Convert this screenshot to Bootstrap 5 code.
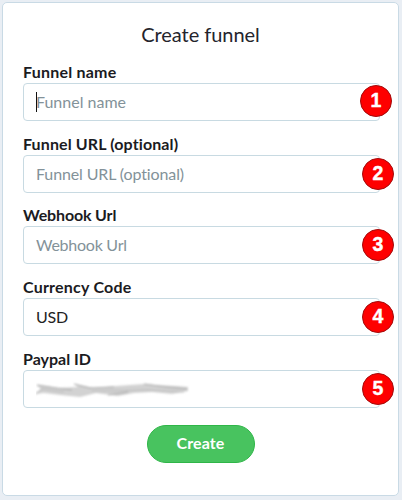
<!DOCTYPE html>
<html lang="en">
<head>
<meta charset="utf-8">
<meta name="viewport" content="width=device-width, initial-scale=1">
<title>Create funnel</title>
<link href="https://cdn.jsdelivr.net/npm/bootstrap@5.3.0/dist/css/bootstrap.min.css" rel="stylesheet">
<style>
html,body{height:500px;overflow:hidden}
body{background:#e9eef4;font-family:Lato,"Open Sans",sans-serif;font-variant-ligatures:none;color:#1b1b22;padding:2px 3px 4px 2px}
.funnel-card{height:494px;border:1px solid #c9dae5;border-radius:5px;padding:18px 20px 0}
.funnel-title{font-size:20px;line-height:26px;height:38px;font-weight:400;letter-spacing:-.05px;color:#24242c}
.field{height:71.7px}
.field .form-label{font-size:16px;line-height:22px;height:24px;padding-top:2px;font-weight:700;display:block;white-space:nowrap}
.track-wide{letter-spacing:.22px}
.track-mid{letter-spacing:.12px}
.track-tight{letter-spacing:-.15px}
.field .form-control{height:38px;width:357px;border:1px solid #c8dae2;border-radius:4px;padding:0 12px 1px;font-size:16px;line-height:35px;color:#222}
.field .form-control::placeholder{color:#839299;opacity:1}
.field .form-control.track-tight{letter-spacing:-.25px}
.field .form-control.track-snug{letter-spacing:-.12px}
.step{right:-16px;top:3px;width:32px;height:32px;border:1.5px solid #a30b0b;background:#fe0000;color:#fff;font:700 19.5px/28px "Liberation Sans",sans-serif;-webkit-text-stroke:.4px #fff}
.step-first{right:-14px;top:2px}
.caret{left:13px;top:9px;width:1px;height:20px;background:#111}
.btn-create{width:108px;height:38px;margin-top:8px;background:#48c35f;border:1px solid #2fb648;color:#fff;font-size:16px;line-height:34px;font-weight:700;letter-spacing:.1px;padding:0 0 2px}
</style>
</head>
<body>
<main class="funnel-card bg-white">
  <h1 class="funnel-title text-center mb-0">Create funnel</h1>
  <form>
    <div class="field"><label class="form-label track-wide mb-0" for="f1">Funnel name</label>
      <div class="position-relative"><input id="f1" class="form-control" placeholder="Funnel name"><span class="caret position-absolute"></span><span class="step step-first position-absolute rounded-circle text-center">1</span></div></div>
    <div class="field"><label class="form-label track-mid mb-0" for="f2">Funnel URL (optional)</label>
      <div class="position-relative"><input id="f2" class="form-control track-snug" placeholder="Funnel URL (optional)"><span class="step position-absolute rounded-circle text-center">2</span></div></div>
    <div class="field"><label class="form-label track-tight mb-0" for="f3">Webhook Url</label>
      <div class="position-relative"><input id="f3" class="form-control track-tight" placeholder="Webhook Url"><span class="step position-absolute rounded-circle text-center">3</span></div></div>
    <div class="field"><label class="form-label track-wide mb-0" for="f4">Currency Code</label>
      <div class="position-relative"><input id="f4" class="form-control track-tight" value="USD"><span class="step position-absolute rounded-circle text-center">4</span></div></div>
    <div class="field"><label class="form-label mb-0" for="f5">Paypal ID</label>
      <div class="position-relative"><div id="f5" class="form-control d-flex align-items-start">
        <svg width="156" height="36" viewBox="0 0 156 36" fill="none" aria-hidden="true">
          <defs><filter id="soft" x="-5%" y="-30%" width="110%" height="160%"><feGaussianBlur stdDeviation=".9"/></filter></defs>
          <g filter="url(#soft)">
            <path d="M0 14 L10 15 L22 17 L42 16 L38 13 L58 17 L80 15 L108 13 L118 14 L140 15 L152 16 L152 20 L136 23 L116 21 L98 22 L82 25 L60 22 L44 26 L24 24 L8 22 L-1 23 L5 18Z" fill="#d2d2d2"/>
            <path d="M1 14 L20 17 L36 19 M38 13 L54 17 L78 16 M108 13 L130 16 L151 18 M72 24 L92 21" stroke="#a6a6a6" stroke-width="1"/>
            <path d="M0 23 L6 18 L28 21 M56 20 L112 19 L148 21" stroke="#bdbdbd" stroke-width="1.2"/>
          </g>
        </svg></div><span class="step position-absolute rounded-circle text-center">5</span></div></div>
    <div class="text-center"><button type="button" class="btn btn-create rounded-pill">Create</button></div>
  </form>
</main>
<script src="https://cdn.jsdelivr.net/npm/bootstrap@5.3.0/dist/js/bootstrap.bundle.min.js"></script>
</body>
</html>
